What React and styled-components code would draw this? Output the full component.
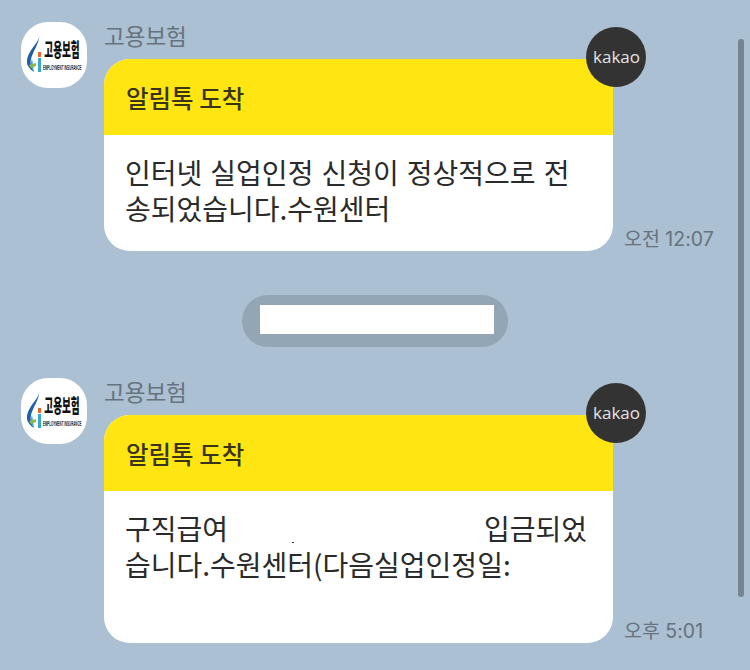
import React from 'react'
import styled, { createGlobalStyle } from 'styled-components'

const GlobalStyle = createGlobalStyle`
  html, body {
    margin: 0;
    padding: 0;
    background: #abc0d2;
  }
`

const KR = `"Noto Sans CJK KR", "Noto Sans", sans-serif`

const Logo = () => (
  <LogoBox>
    <LogoMark width="17" height="40" viewBox="0 0 17 40">
      <path d="M13.5 1 C13 7 8 11 4 18 C1 23 0 28 2 32 C4 35 6 37 8 38 C5 34 4 30 5 25 C7 17 13 10 13.5 1 Z" fill="#1f5fa8" />
      <path d="M6 25 C4 30 5 35 8 38 C7 33 7 29 6 25 Z" fill="#35a9c9" />
      <path d="M3 31 L10 29 L10 32 L5 34 Z" fill="#8fb84a" />
      <rect x="12" y="18" width="3" height="5" fill="#e8632a" />
      <rect x="12" y="24" width="3" height="14" fill="#35a9c9" />
    </LogoMark>
    <LogoText>
      <LogoTitle>고용보험</LogoTitle>
      <LogoSub>EMPLOYMENT INSURANCE</LogoSub>
    </LogoText>
  </LogoBox>
)

const Message = ({ time, tall, children }) => (
  <MessageRow>
    <Logo />
    <Column>
      <Sender>고용보험</Sender>
      <CardRow>
        <Card>
          <CardHead>알림톡 도착</CardHead>
          <CardBody $tall={tall}>{children}</CardBody>
          <KakaoBadge>kakao</KakaoBadge>
        </Card>
        <Time>{time}</Time>
      </CardRow>
    </Column>
  </MessageRow>
)

const App = () => {
  return (
    <Page>
      <GlobalStyle />
      <Message time="오전 12:07">
        인터넷 실업인정 신청이 정상적으로 전<br />송되었습니다.수원센터
      </Message>
      <DatePill>
        <Masked />
      </DatePill>
      <Message time="오후 5:01" tall>
        구직급여<Gap />입금되었<br />습니다.수원센터(다음실업인정일:
        <Speck />
      </Message>
      <Scrollbar />
    </Page>
  )
}

const Page = styled.div`
  position: relative;
  width: 750px;
  height: 670px;
  overflow: hidden;
  background: #abc0d2;
  padding-top: 22px;
  box-sizing: border-box;
  font-family: ${KR};
`

const MessageRow = styled.div`
  display: flex;
  align-items: flex-start;
  gap: 17px;
  padding-left: 21px;
`

const LogoBox = styled.div`
  width: 66px;
  height: 66px;
  flex: none;
  background: #fff;
  border-radius: 27px;
  display: flex;
  align-items: center;
  gap: 1px;
  padding: 0 0 0 5px;
  box-sizing: border-box;
  overflow: hidden;
`

const LogoMark = styled.svg`
  flex: none;
  margin-top: -3px;
`

const LogoText = styled.div`
  display: flex;
  flex-direction: column;
  align-items: center;
  width: 36px;
  flex: none;
`

const LogoTitle = styled.div`
  font-size: 9.6px;
  line-height: 21px;
  height: 21px;
  font-weight: 900;
  color: #111;
  white-space: nowrap;
  transform: scaleY(2);
`

const LogoSub = styled.div`
  font-family: "Liberation Sans", sans-serif;
  font-size: 5px;
  font-weight: 700;
  line-height: 8px;
  height: 8px;
  margin-top: 3px;
  color: #222;
  white-space: nowrap;
  transform: scale(0.58, 1.5);
`

const Column = styled.div`
  display: flex;
  flex-direction: column;
`

const Sender = styled.div`
  font-size: 22.5px;
  line-height: 26px;
  height: 37px;
  color: #66727d;
`

const CardRow = styled.div`
  display: flex;
  align-items: flex-end;
  gap: 11px;
`

const Card = styled.div`
  position: relative;
  width: 509px;
  background: #fff;
  border-radius: 26px;
`

const CardHead = styled.div`
  height: 76px;
  box-sizing: border-box;
  padding-left: 22px;
  background: #ffe512;
  border-radius: 26px 26px 0 0;
  font-size: 24.5px;
  font-weight: 500;
  line-height: 78px;
  color: #38341a;
`

const CardBody = styled.div`
  position: relative;
  height: ${p => (p.$tall ? 152 : 116)}px;
  box-sizing: border-box;
  padding: 19px 21px 0;
  font-size: 28px;
  word-spacing: 1.8px;
  line-height: 36px;
  color: #2a2a2a;
  white-space: nowrap;
`

const Gap = styled.span`
  display: inline-block;
  width: 256px;
`

const Speck = styled.span`
  position: absolute;
  left: 188px;
  top: 51px;
  width: 2px;
  height: 1px;
  background: #333;
`

const KakaoBadge = styled.div`
  position: absolute;
  top: -32px;
  right: -33px;
  width: 60px;
  height: 60px;
  box-sizing: border-box;
  padding-left: 1px;
  border-radius: 50%;
  background: #333;
  color: #e4e4e4;
  font-family: "Open Sans", sans-serif;
  font-size: 17px;
  line-height: 60px;
  text-align: center;
`

const Time = styled.div`
  font-family: Inter, ${KR};
  font-size: 19.5px;
  line-height: 24px;
  color: #66727d;
  white-space: nowrap;
`

const DatePill = styled.div`
  width: 266px;
  height: 52px;
  margin: 44px 0 31px 242px;
  border-radius: 26px;
  background: #92a6b5;
  padding: 10px 0 0 18px;
  box-sizing: border-box;
`

const Masked = styled.div`
  width: 234px;
  height: 29px;
  background: #fff;
`

const Scrollbar = styled.div`
  position: absolute;
  top: 39px;
  left: 738px;
  width: 6px;
  height: 558px;
  border-radius: 3px;
  background: #758490;
`

export default App
